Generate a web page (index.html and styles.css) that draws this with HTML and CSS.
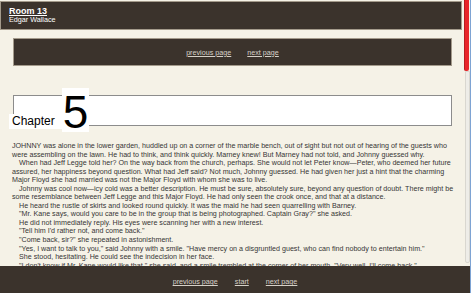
FILE: index.html
```html
<!DOCTYPE html>
<html lang="en">
<head>
    <meta charset="UTF-8">
    <meta name="viewport" content="width=device-width, initial-scale=1.0">
    <title>Room 13 - Chapter 5</title>
    <link rel="stylesheet" href="styles.css">
</head>
<body>
    <div class="window">
        <div class="reader">
            <div class="book-header">
                <div class="book-title">Room 13</div>
                <div class="book-author">Edgar Wallace</div>
            </div>

            <div class="page-nav">
                <a href="#">previous page</a>
                <a href="#">next page</a>
            </div>

            <div class="chapter-box">
                <h2 class="chapter-title">
                    <span class="chapter-word">Chapter</span>
                    <span class="chapter-num">5</span>
                </h2>
            </div>

            <div class="chapter-text">
                <p class="first">JOHNNY was alone in the lower garden, huddled up on a corner of the marble bench, out of sight but not out of hearing of the guests who were assembling on the lawn. He had to think, and think quickly. Marney knew! But Marney had not told, and Johnny guessed why.</p>
                <p>When had Jeff Legge told her? On the way back from the church, perhaps. She would not let Peter know&mdash;Peter, who deemed her future assured, her happiness beyond question. What had Jeff said? Not much, Johnny guessed. He had given her just a hint that the charming Major Floyd she had married was not the Major Floyd with whom she was to live.</p>
                <p>Johnny was cool now&mdash;icy cold was a better description. He must be sure, absolutely sure, beyond any question of doubt. There might be some resemblance between Jeff Legge and this Major Floyd. He had only seen the crook once, and that at a distance.</p>
                <p>He heard the rustle of skirts and looked round quickly. It was the maid he had seen quarrelling with Barney.</p>
                <p>"Mr. Kane says, would you care to be in the group that is being photographed. Captain Gray?" she asked.</p>
                <p>He did not immediately reply. His eyes were scanning her with a new interest.</p>
                <p>"Tell him I'd rather not, and come back."</p>
                <p>"Come back, sir?" she repeated in astonishment.</p>
                <p>"Yes, I want to talk to you," said Johnny with a smile. "Have mercy on a disgruntled guest, who can find nobody to entertain him."</p>
                <p>She stood, hesitating. He could see the indecision in her face.</p>
                <p>"I don't know if Mr. Kane would like that," she said, and a smile trembled at the corner of her mouth. "Very well, I'll come back."</p>
            </div>
        </div>

        <div class="scrollbar">
            <div class="scroll-thumb"></div>
            <div class="scroll-track"></div>
        </div>
    </div>

    <div class="bottom-nav">
        <a href="#">previous page</a>
        <a href="#">start</a>
        <a href="#">next page</a>
    </div>
</body>
</html>
```

FILE: styles.css
```css
body {
    font-family: 'Liberation Sans', Arial, sans-serif;
    margin: 0;
    display: flex;
    flex-direction: column;
    height: 100vh;
    background-color: #f5f2e7;
    color: #353535;
    border-right: 1px solid #7ea3d3;
    box-sizing: border-box;
}
.window {
    display: flex;
    flex: 1;
    min-height: 0;
    overflow: hidden;
}
.reader {
    width: 462px;
    overflow: hidden;
}
.book-header {
    margin-top: 1px;
    padding: 4px 8px 5px;
    background-color: #3b332c;
    border: 1px solid #a39a8b;
    color: #fff;
}
.book-title {
    font-size: 9px;
    line-height: 10px;
    font-weight: bold;
    text-decoration: underline;
}
.book-author {
    font-size: 7.2px;
    line-height: 8px;
}
.page-nav {
    display: flex;
    justify-content: center;
    align-items: center;
    gap: 16px;
    height: 26px;
    margin: 8px 10px 0 13px;
    background-color: #3b332c;
    border: 1px solid #a39a8b;
}
.page-nav a,
.bottom-nav a {
    color: #d6d1c8;
    font-size: 7.2px;
}
.chapter-box {
    display: flex;
    align-items: flex-end;
    height: 29px;
    margin: 29px 10px 0 13px;
    background-color: #fff;
    border: 1px solid #8c8c8c;
}
.chapter-title {
    display: flex;
    align-items: flex-end;
    margin: 0 0 -7px -5px;
    font-weight: normal;
    color: #000;
}
.chapter-word {
    background-color: #fff;
    font-size: 12px;
    line-height: 15px;
    padding: 0 7px 0 3px;
    margin-bottom: 3px;
}
.chapter-num {
    background-color: #fff;
    font-size: 46px;
    line-height: 40px;
    padding: 4px 1px 0;
}
.chapter-text {
    margin-top: 16px;
    padding-left: 12px;
    font-size: 7.15px;
    line-height: 8.55px;
}
.chapter-text p {
    margin: 0;
    text-indent: 7px;
}
.chapter-text p.first {
    text-indent: 0;
}
.scrollbar {
    width: 8px;
    padding-left: 2px;
    box-sizing: border-box;
}
.scroll-thumb {
    width: 5px;
    height: 71px;
    background-color: #e8252a;
    border-left: 1px solid #b81c20;
    box-sizing: border-box;
    border-radius: 0 0 2px 2px;
}
.scroll-track {
    width: 5px;
    height: 192px;
    margin-left: 1px;
    background-color: #eeede8;
    border: 1px solid #d9d7d0;
    box-sizing: border-box;
    border-radius: 0 0 2px 2px;
}
.bottom-nav {
    display: flex;
    justify-content: center;
    align-items: center;
    gap: 17px;
    height: 23px;
    padding-top: 4px;
    background-color: #3b332c;
}
```
